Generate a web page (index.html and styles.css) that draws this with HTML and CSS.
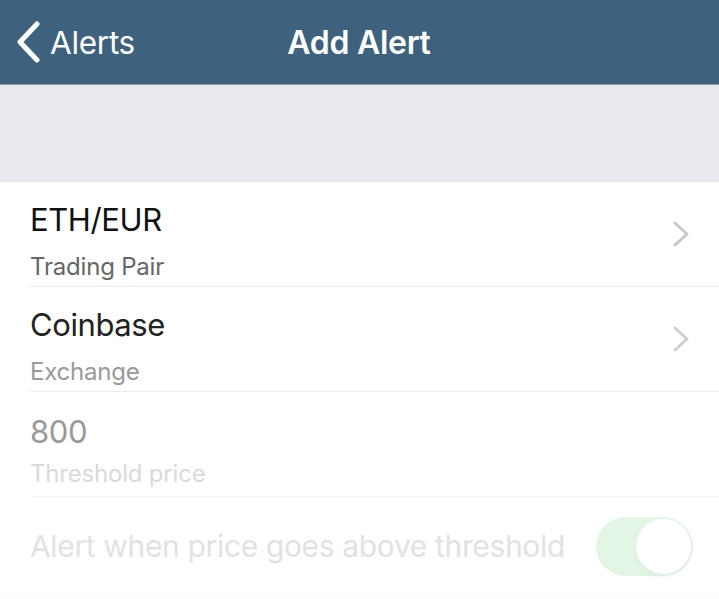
FILE: index.html
```html
<!DOCTYPE html>
<html>
<head>
<meta charset="utf-8">
<link rel="stylesheet" href="styles.css">
</head>
<body>
<header class="navbar">
  <div class="back">
    <svg class="back-icon" width="26" height="42" viewBox="0 0 26 42"><path d="M22 3 L5 21 L22 39" fill="none" stroke="#fff" stroke-width="5" stroke-linecap="round" stroke-linejoin="round"/></svg>
    <span class="back-label">Alerts</span>
  </div>
  <div class="title">Add Alert</div>
</header>
<div class="spacer"></div>
<section class="list">
  <div class="row">
    <div class="row-text">
      <div class="primary dark">ETH/EUR</div>
      <div class="secondary mid">Trading Pair</div>
    </div>
    <svg class="chev" width="16" height="26" viewBox="0 0 16 26"><path d="M2 2 L14 13 L2 24" fill="none" stroke="#c7c7cc" stroke-width="3" stroke-linecap="round" stroke-linejoin="round"/></svg>
  </div>
  <div class="row">
    <div class="row-text">
      <div class="primary dark2">Coinbase</div>
      <div class="secondary light">Exchange</div>
    </div>
    <svg class="chev" width="16" height="26" viewBox="0 0 16 26"><path d="M2 2 L14 13 L2 24" fill="none" stroke="#cfcfd3" stroke-width="3" stroke-linecap="round" stroke-linejoin="round"/></svg>
  </div>
  <div class="row faint-line">
    <div class="row-text">
      <div class="primary grey">800</div>
      <div class="secondary pale">Threshold price</div>
    </div>
  </div>
  <div class="row toggle-row">
    <div class="toggle-label">Alert when price goes above threshold</div>
    <div class="switch"><div class="knob"></div></div>
  </div>
</section>
</body>
</html>
```
FILE: styles.css
```css
html, body { margin: 0; padding: 0; background: #fff; }
body { font-family: "Inter", "Liberation Sans", sans-serif; width: 719px; height: 599px; overflow: hidden; }

.navbar {
  height: 84px;
  background: #3e617d;
  border-bottom: 1px solid #8a9aa8;
  display: flex;
  align-items: center;
  position: relative;
  color: #fff;
}
.back { display: flex; align-items: center; padding-left: 15px; gap: 9px; }
.back-icon { display: block; }
.back-label { font-size: 31.5px; letter-spacing: -0.3px; }
.title {
  position: absolute; left: 0; right: 0; top: 0; bottom: 0;
  display: flex; align-items: center; justify-content: center;
  font-size: 32px; font-weight: 600; letter-spacing: -0.3px;
  padding-right: 1px;
}

.spacer { height: 96px; background: #e9eaef; border-bottom: 1px solid #e0e0e4; }

.list { background: #fff; }
.row {
  height: 104px;
  margin-left: 30px;
  border-bottom: 1px solid #ececec;
  display: flex;
  align-items: center;
  padding-right: 30px;
}
.row-text { flex: 1; display: flex; flex-direction: column; align-self: flex-start; padding-top: 19px; }
.primary { font-size: 31px; letter-spacing: -0.4px; line-height: 38px; }
.secondary { font-size: 24px; letter-spacing: -0.2px; line-height: 30px; margin-top: 13px; }
.dark { color: #111; }
.dark2 { color: #222; }
.mid { color: #666; }
.light { color: #999; }
.grey { color: #999; }
.pale { color: #dadada; }
.chev { display: block; margin-right: 0; }
.faint-line { border-bottom-color: #f7f7f7; }
.faint-line .row-text { padding-top: 21px; }
.faint-line .secondary { margin-top: 8px; }

.toggle-row { margin-left: 0; padding-left: 30px; height: 98px; border-bottom: 1px solid #f9f9f9; padding-right: 26px; }
.toggle-label { flex: 1; font-size: 30px; color: #e2e2e2; letter-spacing: -0.35px; padding-top: 0; }
.switch {
  width: 97px; height: 59px; border-radius: 30px;
  background: #e3f6e6;
  position: relative;
}
.knob {
  position: absolute; right: 2px; top: 2px;
  width: 55px; height: 55px; border-radius: 50%;
  background: #fff;
  box-shadow: 0 3px 6px rgba(0,0,0,0.04);
}
```
